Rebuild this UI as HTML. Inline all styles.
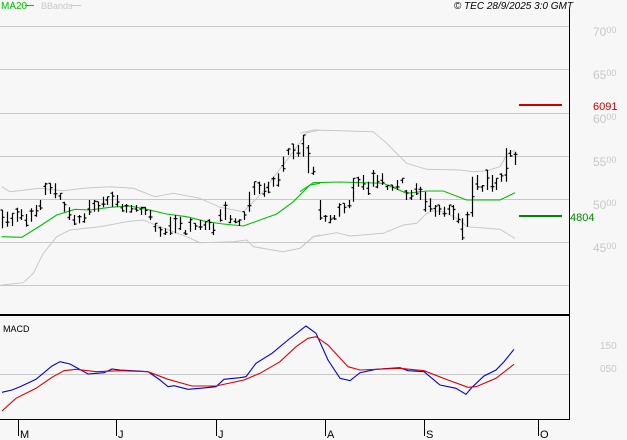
<!DOCTYPE html>
<html><head><meta charset="utf-8"><style>
html,body{margin:0;padding:0;background:#f7f7f7;}
svg{display:block;font-family:"Liberation Sans",sans-serif;}
</style></head><body>
<svg id="s" width="627" height="440" viewBox="0 0 627 440" xmlns="http://www.w3.org/2000/svg">
<rect width="627" height="440" fill="#f7f7f7"/>
<g stroke="#c8c8c8" stroke-width="1">
<line x1="0" y1="26.5" x2="569" y2="26.5"/><line x1="0" y1="69.5" x2="569" y2="69.5"/>
<line x1="0" y1="113.5" x2="569" y2="113.5"/><line x1="0" y1="156.5" x2="569" y2="156.5"/>
<line x1="0" y1="199.5" x2="569" y2="199.5"/><line x1="0" y1="242.5" x2="569" y2="242.5"/>
<line x1="0" y1="285.5" x2="569" y2="285.5"/><line x1="0" y1="374.5" x2="569" y2="374.5"/>
</g>
<g id="plots"></g>
<line x1="569.5" y1="9" x2="569.5" y2="420" stroke="#000"/>
<line x1="0" y1="315" x2="569" y2="315" stroke="#000" stroke-width="2"/>
<line x1="0" y1="419.5" x2="570" y2="419.5" stroke="#000"/>
<g stroke="#000"><line x1="18.5" y1="419" x2="18.5" y2="436"/><line x1="116.5" y1="419" x2="116.5" y2="436"/><line x1="216.5" y1="419" x2="216.5" y2="436"/><line x1="325.5" y1="419" x2="325.5" y2="436"/><line x1="424.5" y1="419" x2="424.5" y2="436"/><line x1="538.5" y1="419" x2="538.5" y2="436"/></g>
<g font-size="11" fill="#000"><text x="20" y="438">M</text><text x="118" y="438">J</text><text x="218" y="438">J</text><text x="327" y="438">A</text><text x="426" y="438">S</text><text x="540" y="438">O</text></g>
<text x="1" y="9" font-size="10" fill="#00c000">MA20</text><line x1="25" y1="5.5" x2="34" y2="5.5" stroke="#00c000"/>
<text x="41" y="9" font-size="9" fill="#c8c8c8">BBands</text><line x1="71" y1="5.5" x2="81" y2="5.5" stroke="#c8c8c8"/>
<text x="573" y="9" font-size="10" font-style="italic" fill="#000" text-anchor="end">© TEC 28/9/2025 3:0 GMT</text>
<g font-size="12" fill="#c8c8c8">
<text x="593" y="36">70<tspan font-size="9" dy="-3">00</tspan></text>
<text x="593" y="79">65<tspan font-size="9" dy="-3">00</tspan></text>
<text x="593" y="123">60<tspan font-size="9" dy="-3">00</tspan></text>
<text x="593" y="166">55<tspan font-size="9" dy="-3">00</tspan></text>
<text x="593" y="209">50<tspan font-size="9" dy="-3">00</tspan></text>
<text x="593" y="252">45<tspan font-size="9" dy="-3">00</tspan></text>
<text x="600" y="349" font-size="10">150</text>
<text x="600" y="372" font-size="10">050</text>
</g>
<line x1="519" y1="105" x2="562" y2="105" stroke="#cc0000" stroke-width="2"/>
<text x="593" y="110" font-size="11" fill="#cc0000">6091</text>
<line x1="519" y1="216" x2="562" y2="216" stroke="#008800" stroke-width="2"/>
<text x="570" y="221" font-size="11" fill="#008800">4804</text>
<text x="3" y="332" font-size="9" fill="#000">MACD</text>
</svg>
<script>
var g=document.getElementById('plots');var NS='http://www.w3.org/2000/svg';
function pl(pts,color,fx,fy,ox,oy,w){var d=pts.map(function(p,i){return (i?'L':'M')+(ox+p[0]/fx).toFixed(1)+' '+(oy+p[1]/fy).toFixed(1)}).join('');var e=document.createElementNS(NS,'path');e.setAttribute('d',d);e.setAttribute('fill','none');e.setAttribute('stroke',color);e.setAttribute('stroke-width',w||'1.1');g.appendChild(e);}
pl([[5,200],[30,215],[120,205],[190,212],[250,205],[330,200],[400,205],[465,230],[520,220],[600,235],[660,262],[730,275],[790,215],[830,160],[880,95],[920,38],[960,30]],'#c8c8c8',3,3,0,120,1);
pl([[0,40],[40,30],[220,35],[260,70],[300,110],[320,130],[380,148],[480,150],[520,155],[560,152],[600,140],[620,105],[645,90]],'#c8c8c8',3,3,300,120,1);
pl([[5,495],[70,488],[100,460],[130,400],[170,350],[210,330],[300,320],[380,305],[430,300],[480,320],[560,350],[600,368],[700,365],[740,360],[760,380],[850,395],[900,385],[940,350],[960,345]],'#c8c8c8',3,3,0,120,1);
pl([[0,385],[40,350],[110,338],[150,348],[250,340],[310,315],[350,310],[380,280],[400,272],[430,275],[480,300],[500,320],[600,328],[645,355]],'#c8c8c8',3,3,300,120,1);
pl([[5,350],[65,352],[120,318],[170,285],[225,268],[270,270],[330,262],[390,258],[440,268],[500,282],[560,290],[620,305],[670,312],[730,318],[780,300],[830,282],[880,245],[930,195],[960,190]],'#00c000',3,3,0,120);
pl([[0,215],[40,188],[120,186],[250,190],[320,220],[380,213],[430,213],[500,240],[600,240],[645,218]],'#00c000',3,3,300,120);
pl([[5,277],[30,270],[50,260],[90,238],[130,198],[150,185],[175,192],[220,222],[260,218],[280,207],[300,210],[330,212],[370,215],[400,240],[420,260],[435,257],[470,268],[500,265],[540,260],[560,238],[600,233],[615,230],[640,190],[680,160],[720,120],[765,78],[790,100],[820,180],[850,235],[875,242],[900,218],[940,208],[1000,203],[1020,212],[1060,215],[1100,255],[1140,265],[1165,283],[1180,262],[1210,228],[1240,210],[1260,185],[1285,148]],'#0000dd',2.5,3,0,300);
pl([[5,333],[40,295],[90,265],[130,232],[160,212],[190,208],[240,215],[300,212],[370,215],[420,238],[480,258],[540,258],[610,240],[650,220],[700,185],[740,140],[770,115],[790,110],[820,135],[870,200],[900,210],[1000,205],[1060,212],[1120,240],[1170,262],[1190,260],[1240,235],[1285,193]],'#dd0000',2.5,3,0,300);
var A=[[2,270,325],[7,275,320],[12,280,318],[17,263,305],[21,268,300],[26,282,320],[31,265,305],[36,255,290],[40,240,270],[45,188,225],[50,190,222],[55,190,235],[60,220,240],[64,245,275],[69,262,300],[74,285,315],[79,285,310],[84,280,308],[89,240,285],[94,240,275],[98,245,275],[103,230,262],[107,230,255],[112,215,260],[117,225,260],[122,252,275],[126,252,278],[131,255,278],[136,255,275],[141,260,285],[145,262,285],[150,270,300],[155,310,335],[160,320,350],[165,325,345],[170,290,345],[175,285,340],[180,290,330],[185,330,345],[190,295,335],[195,310,330],[200,300,330],[205,305,330],[209,298,330],[213,310,345],[220,268,305],[225,245,300],[230,285,310],[235,295,310],[239,298,318],[244,275,300],[249,215,275],[254,185,225],[259,185,222],[264,190,230],[268,185,220],[273,170,200],[278,160,200],[283,110,155],[288,85,105],[293,72,118],[298,75,110],[303,45,110],[308,75,160],[313,140,165]];
var B=[[320,240,300],[325,285,305],[330,285,310],[334,285,300],[339,250,290],[344,250,280],[349,240,265],[353,175,245],[358,170,200],[363,165,210],[368,185,225],[373,150,200],[377,165,205],[382,160,195],[387,195,210],[392,195,212],[397,180,210],[402,175,190],[406,210,240],[411,210,240],[416,190,225],[420,200,240],[425,215,275],[430,235,275],[435,255,290],[439,255,285],[444,260,290],[449,255,285],[453,255,300],[458,280,310],[462,295,360],[467,275,320],[472,170,290],[477,165,210],[482,195,215],[487,150,210],[492,165,215],[496,175,210],[501,160,185],[506,85,185],[510,90,110],[515,95,135]];
var d='';
A.concat(B).forEach(function(b,i){var h=120+b[1]/3,l=120+b[2]/3,x=b[0]+.5;var o=h+(l-h)*((i*7)%10)/10,c=h+(l-h)*((i*3+4)%10)/10;d+='M'+x+' '+h.toFixed(1)+'V'+l.toFixed(1)+'M'+(x-2)+' '+o.toFixed(1)+'H'+x+'M'+x+' '+c.toFixed(1)+'H'+(x+2);});
var e=document.createElementNS(NS,'path');e.setAttribute('d',d);e.setAttribute('stroke','#000');e.setAttribute('stroke-width','1.2');e.setAttribute('fill','none');g.appendChild(e);
</script>
</body></html>
